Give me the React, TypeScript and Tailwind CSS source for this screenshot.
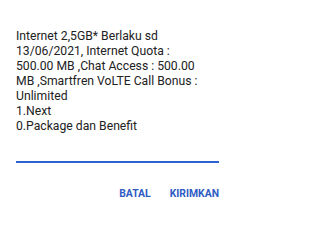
export default function App() {
  return (
    <div className="w-[236px] h-[214px] bg-white font-['Roboto',sans-serif] text-[#222] overflow-hidden">
      <div className="pt-[29px] pl-4 pr-[30px] text-[12.2px] leading-[15px]">
        <p>
          Internet 2,5GB* Berlaku sd 13/06/2021, Internet Quota : 500.00 MB ,Chat Access : 500.00 MB ,Smartfren VoLTE Call Bonus : Unlimited
        </p>
        <p>1.Next</p>
        <p>0.Package dan Benefit</p>
      </div>
      <div className="mx-4 mt-[27px] w-[203px] h-[2px] bg-[#2f62cf]" />
      <div className="flex justify-end gap-[19px] pr-[17px] mt-[24px] text-[10.4px] leading-[14px] font-bold text-[#2f5bc4]">
        <span>BATAL</span>
        <span>KIRIMKAN</span>
      </div>
    </div>
  )
}
